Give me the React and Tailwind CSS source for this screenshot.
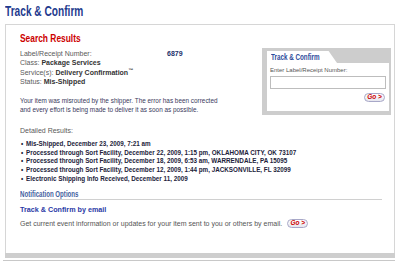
const GoButton = () => (
  <span className="inline-flex items-center justify-center h-[9px] w-[21px] rounded-full border border-[#a8a8c8] bg-gradient-to-b from-white to-[#e6e6ee] text-[6.5px] leading-none font-bold italic text-[#cc0000]">
    Go &gt;
  </span>
);

const events = [
  "Mis-Shipped, December 23, 2009, 7:21 am",
  "Processed through Sort Facility, December 22, 2009, 1:15 pm, OKLAHOMA CITY, OK 73107",
  "Processed through Sort Facility, December 18, 2009, 6:53 am, WARRENDALE, PA 15095",
  "Processed through Sort Facility, December 12, 2009, 1:44 pm, JACKSONVILLE, FL 32099",
  "Electronic Shipping Info Received, December 11, 2009",
];

export default function App() {
  return (
    <div className="w-[400px] h-[262px] bg-white overflow-hidden font-['Liberation_Sans',Arial,sans-serif]">
      {/* page title, condensed look */}
      <div className="h-[24px] pl-[5px] pt-[2px] text-[14.5px] leading-[18px]">
        <h1 className="inline-block whitespace-nowrap origin-left scale-x-[0.7] font-bold text-[#1f3b8e]">
          Track &amp; Confirm
        </h1>
      </div>

      {/* main panel */}
      <div className="ml-[5px] w-[390px] h-[229px] border-l border-t border-r border-[#d6d6d6] pl-[14px] pr-[3px] pt-[7px]">
        <div className="flex">
          <div className="flex-1">
            <div className="text-[11.5px] leading-[13px]">
              <h2 className="inline-block whitespace-nowrap origin-left scale-x-[0.73] font-bold text-[#cc0000]">
                Search Results
              </h2>
            </div>
            <div className="mt-[4px] text-[7px] leading-[9.4px] text-[#5a5a5a]">
              <div className="flex">
                <span className="w-[147px]">Label/Receipt Number:</span>
                <span className="font-bold text-[#1c2f6b]">6879</span>
              </div>
              <div>
                Class: <span className="font-bold text-[#333]">Package Services</span>
              </div>
              <div>
                Service(s): <span className="font-bold text-[#333]">Delivery Confirmation</span>
                <sup className="text-[5px] font-bold text-[#333]">™</sup>
              </div>
              <div>
                Status: <span className="font-bold text-[#333]">Mis-Shipped</span>
              </div>
            </div>
            <p className="mt-[9px] text-[6.4px] leading-[9px] text-[#3a3a5c] whitespace-nowrap">
              Your item was misrouted by the shipper. The error has been corrected
              <br />
              and every effort is being made to deliver it as soon as possible.
            </p>
          </div>

          {/* track & confirm box */}
          <div className="mt-[16px] w-[129px] h-[67px] bg-[#cdcdcd] pl-[5px] pr-[2px] pt-[3px]">
            <div className="w-[70px] h-[12px] bg-white pl-[4px] text-[8.5px] leading-[12px] [clip-path:polygon(0_0,88%_0,100%_100%,0_100%)]">
              <span className="inline-block whitespace-nowrap origin-left scale-x-[0.74] font-bold text-[#2b4a9a]">
                Track &amp; Confirm
              </span>
            </div>
            <div className="h-[48px] bg-white px-[3px] pt-[3px]">
              <div className="text-[6px] leading-[8px] text-[#555] whitespace-nowrap">Enter Label/Receipt Number:</div>
              <div className="mt-[2px] h-[13px] border border-[#bdbdbd] bg-white" />
              <div className="mt-[4px] flex justify-end pr-[1px]">
                <GoButton />
              </div>
            </div>
          </div>
        </div>

        <div className="mt-[11px] text-[7px] leading-[9px] text-[#5a5a5a]">Detailed Results:</div>
        <ul className="mt-[5px] text-[6.3px] leading-[8.7px] font-bold text-[#22223a]">
          {events.map((e) => (
            <li key={e} className="flex whitespace-nowrap">
              <span className="w-[6px] pl-[1px]">•</span>
              <span>{e}</span>
            </li>
          ))}
        </ul>

        <div className="mt-[5px] mr-[9px] border-b border-[#d0d0d0] text-[8.5px] leading-[10px]">
          <span className="inline-block whitespace-nowrap origin-left scale-x-[0.72] font-bold text-[#4461a0]">
            Notification Options
          </span>
        </div>
        <div className="mt-[5px] text-[7.2px] leading-[10px] font-semibold text-[#2a3aa6]">
          Track &amp; Confirm by email
        </div>
        <div className="mt-[4px] flex items-center gap-[5px] text-[7px] leading-[10px] text-[#555] whitespace-nowrap">
          <span>Get current event information or updates for your item sent to you or others by email.</span>
          <GoButton />
        </div>
      </div>

      {/* bottom bar */}
      <div className="ml-[5px] w-[390px] h-[5px] bg-[#cecece]" />
      <div className="mt-[2px] ml-[3px] w-[392px] h-px bg-[#c8c8c8]" />
    </div>
  );
}
